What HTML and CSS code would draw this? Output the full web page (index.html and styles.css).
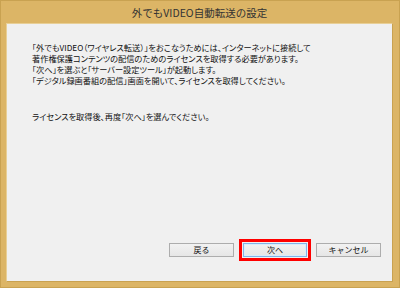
FILE: index.html
```html
<!DOCTYPE html>
<html lang="ja">
<head>
<meta charset="UTF-8" />
<title>外でもVIDEO自動転送の設定</title>
<link rel="stylesheet" href="styles.css">
</head>
<body>
  <div class="window" role="dialog" aria-label="外でもVIDEO自動転送の設定">
    <div class="titlebar">外でもVIDEO自動転送の設定</div>
    <div class="client">
      <div class="message">
        <p>「外でもVIDEO（ワイヤレス転送）」をおこなうためには、インターネットに接続して<br>
        著作権保護コンテンツの配信のためのライセンスを取得する必要があります。<br>
        「次へ」を選ぶと「サーバー設定ツール」が起動します。<br>
        「デジタル録画番組の配信」画面を開いて、ライセンスを取得してください。</p>
        <p>ライセンスを取得後、再度「次へ」を選んでください。</p>
      </div>
      <div class="buttons">
        <button type="button">戻る</button>
        <button type="button" class="default">次へ</button>
        <button type="button">キャンセル</button>
      </div>
    </div>
  </div>
</body>
</html>
```

FILE: styles.css
```css
:root {
  --gold: #dcb566;
  --gold-dark: #c9a251;
  --face: #f0f0f0;
  --text: #111;
}

* {
  box-sizing: border-box;
}

body {
  margin: 0;
  font-family: "Noto Sans CJK JP", "Noto Sans", sans-serif;
  color: var(--text);
}

.window {
  width: 400px;
  height: 288px;
  background: var(--gold);
  border: 1px solid var(--gold-dark);
  display: flex;
  flex-direction: column;
  padding: 0 6px 5px 5px;
}

.titlebar {
  height: 22px;
  line-height: 24px;
  text-align: center;
  font-size: 10.5px;
  color: #333;
}

.client {
  flex: 1;
  background: var(--face);
  border: 1px solid var(--gold-dark);
  border-top-color: #e8cf96;
  border-left-color: #e8cf96;
  display: flex;
  flex-direction: column;
  padding: 18px 11px 0 25px;
}

.message {
  flex: 1;
  font-size: 8.2px;
  line-height: 11px;
  font-feature-settings: "palt";
}

.message p {
  margin: 0 0 25px;
}

.buttons {
  display: flex;
  justify-content: flex-end;
  align-items: center;
  gap: 9px;
  height: 23px;
  margin-bottom: 20px;
}

button {
  width: 65px;
  height: 14px;
  padding: 0;
  font-family: inherit;
  font-size: 8px;
  line-height: 12px;
  color: var(--text);
  background: linear-gradient(#f2f2f2, #e6e6e6);
  border: 1px solid #adadad;
}

button.default {
  width: 64px;
  border-color: #7fb4e8;
  box-shadow: inset 0 0 0 1px #d9ecfb;
  outline: 3px solid #ff0000;
  outline-offset: 1px;
}
```
